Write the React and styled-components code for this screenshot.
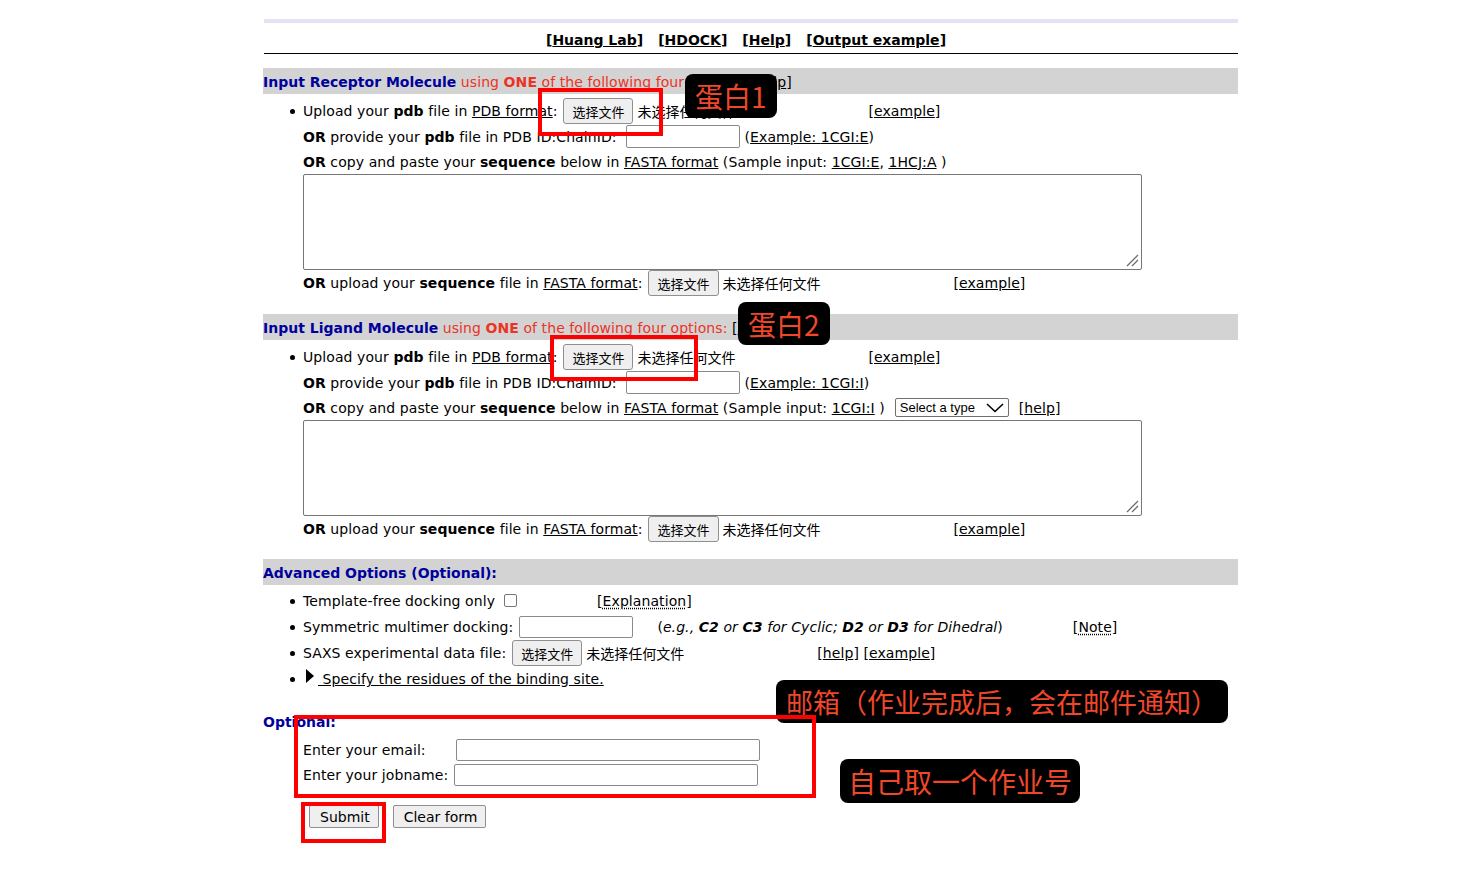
import React from "react";
import styled, { createGlobalStyle, css } from "styled-components";

const GlobalStyle = createGlobalStyle`
  html, body { margin: 0; padding: 0; background: #fff; }
  body {
    font-family: "DejaVu Sans", Verdana, "Noto Sans CJK SC", sans-serif;
    font-size: 14px;
    letter-spacing: 0.08px;
    color: #000;
  }
`;

const Page = styled.div`
  position: relative;
  width: 974px;
  margin-left: 264px;
  padding-top: 19px;
  padding-bottom: 40px;
`;

const TopBar = styled.div`
  height: 4px;
  background: #e7e1f5;
`;

const Nav = styled.div`
  display: flex;
  justify-content: center;
  gap: 15px;
  padding: 8px 10px 3px 0;
  border-bottom: 1px solid #000;
  font-weight: bold;
  line-height: 19px;
  letter-spacing: 0;
`;

const A = styled.span`
  color: #000;
  text-decoration: underline;
  ${p => p.$dotted && css`
    text-decoration: underline dotted;
    text-underline-offset: 2px;
  `}
`;

const SectionHead = styled.div`
  height: 26px;
  display: flex;
  align-items: center;
  padding-top: 1px;
  box-sizing: border-box;
  background: ${p => (p.$plain ? "transparent" : "#d3d3d3")};
  margin-top: ${p => p.$top}px;
  white-space: pre;
  margin-left: -1px;
`;

const Navy = styled.b`
  color: #00009c;
  letter-spacing: 0;
`;

const Red = styled.span`
  color: #ec3326;
`;

const List = styled.div`
  margin-top: ${p => p.$top || 4}px;
  padding-left: 39px;
`;

const Row = styled.div`
  position: relative;
  height: ${p => p.$h || 25}px;
  display: flex;
  align-items: center;
  white-space: pre;
  ${p => p.$bullet && css`
    &::before {
      content: "";
      position: absolute;
      left: -13px;
      top: 50%;
      width: 5px;
      height: 5px;
      margin-top: -2px;
      border-radius: 50%;
      background: #000;
    }
  `}
`;

const FileBox = styled.span`
  display: inline-flex;
  align-items: center;
  width: ${p => p.$w || 305}px;
  margin-left: ${p => p.$ml || 5}px;
  flex-shrink: 0;
  letter-spacing: 0;
`;

const FileButton = styled.span`
  display: inline-flex;
  align-items: center;
  justify-content: center;
  height: 24px;
  padding: 0 8px;
  border: 1px solid #8f8f8f;
  border-radius: 3px;
  background: #efefef;
  font-family: "Noto Sans CJK SC", sans-serif;
  font-size: 13px;
  color: #000;
`;

const NoFile = styled.span`
  margin-left: 4px;
  font-family: "Noto Sans CJK SC", sans-serif;
  font-size: 14px;
`;

const TextInput = styled.span`
  display: inline-block;
  width: ${p => p.$w}px;
  height: ${p => p.$h || 21}px;
  border: 1px solid #8a8a8a;
  border-radius: 2px;
  margin-left: ${p => p.$ml || 6}px;
  margin-right: ${p => p.$mr || 5}px;
  background: #fff;
  flex-shrink: 0;
`;

const TextArea = styled.div`
  position: relative;
  width: 837px;
  height: 94px;
  border: 1px solid #767676;
  border-radius: 2px;
`;

const Grip = styled.svg`
  position: absolute;
  right: 2px;
  bottom: 2px;
`;

const Select = styled.span`
  display: inline-flex;
  align-items: center;
  justify-content: space-between;
  width: 104px;
  height: 17px;
  padding: 0 4px 0 4px;
  margin-left: 10px;
  border: 1px solid #6f6f6f;
  border-radius: 2px;
  font-family: "Liberation Sans", Arial, sans-serif;
  font-size: 13px;
  letter-spacing: 0;
`;

const Gap = styled.span`
  display: inline-block;
  width: ${p => p.$w}px;
  flex-shrink: 0;
`;

const Checkbox = styled.span`
  display: inline-block;
  width: 11px;
  height: 11px;
  border: 1px solid #767676;
  border-radius: 2px;
  margin-left: 9px;
  margin-bottom: 2px;
`;

const Triangle = styled.span`
  display: inline-block;
  width: 0;
  height: 0;
  border-top: 7px solid transparent;
  border-bottom: 7px solid transparent;
  border-left: 8px solid #000;
  margin: 0 4px 6px 3px;
`;

const FormGrid = styled.div`
  display: grid;
  grid-template-columns: auto auto;
  justify-content: start;
  align-items: center;
  row-gap: 3px;
  column-gap: 6px;
  padding-left: 39px;
  margin-top: 5px;
`;

const FormInput = styled.span`
  display: inline-block;
  width: 302px;
  height: 20px;
  border: 1px solid #8a8a8a;
  border-radius: 2px;
  margin-left: ${p => p.$ml || 0}px;
`;

const Buttons = styled.div`
  display: flex;
  gap: 14px;
  padding-left: 45px;
  margin-top: 19px;
`;

const Button = styled.span`
  display: inline-flex;
  align-items: center;
  height: 21px;
  padding: 0 8px 0 10px;
  border: 1px solid #8f8f8f;
  border-radius: 2px;
  background: #efefef;
  font-size: 14px;
  letter-spacing: 0;
`;

/* annotation overlays drawn on top of the screenshot */
const Mark = styled.div`
  position: absolute;
  left: ${p => p.$x}px;
  top: ${p => p.$y}px;
  width: ${p => p.$w}px;
  height: ${p => p.$h}px;
  border: 4px solid #ff0000;
  box-sizing: border-box;
  pointer-events: none;
`;

const Label = styled.div`
  position: absolute;
  left: ${p => p.$x}px;
  top: ${p => p.$y}px;
  height: ${p => p.$h || 43}px;
  padding: 0 ${p => p.$px || 10}px;
  display: flex;
  align-items: center;
  background: #000;
  border-radius: 8px;
  color: #f0472b;
  font-family: "Noto Sans CJK SC", sans-serif;
  font-size: ${p => p.$fs || 28}px;
  letter-spacing: 0;
  white-space: nowrap;
`;

const ResizeGrip = () => (
  <Grip width="14" height="14" viewBox="0 0 14 14">
    <path d="M2 13 L13 2 M7 13 L13 7" stroke="#6b6b6b" strokeWidth="1.3" />
  </Grip>
);

const Chevron = () => (
  <svg width="18" height="10" viewBox="0 0 18 10">
    <path d="M1 1 L9 8.5 L17 1" fill="none" stroke="#000" strokeWidth="1.6" />
  </svg>
);

const FileInput = ({ w, ml }) => (
  <FileBox $w={w} $ml={ml}>
    <FileButton>选择文件</FileButton>
    <NoFile>未选择任何文件</NoFile>
  </FileBox>
);

const MoleculeSection = ({ title, top, listTop, sample, extra }) => (
  <>
    <SectionHead $top={top}>
      <Navy>{title}</Navy>
      <Red> using <b>ONE</b> of the following four options: </Red>[<A>help</A>]
    </SectionHead>
    <List $top={listTop}>
      <Row $bullet $h={26}>
        Upload your <b>pdb</b> file in <A>PDB format</A>:
        <FileInput ml={6} />
        [<A>example</A>]
      </Row>
      <Row>
        <b>OR</b> provide your <b>pdb</b> file in PDB ID:ChainID:
        <TextInput $w={112} $ml={9} />
        (<A>Example: {sample[0]}</A>)
      </Row>
      <Row>
        <b>OR</b> copy and paste your <b>sequence</b> below in <A>FASTA format</A> (Sample input: {sample.map((s, i) => (
          <React.Fragment key={s}>{i > 0 && ", "}<A>{s}</A></React.Fragment>
        ))} )
        {extra}
      </Row>
      <TextArea>
        <ResizeGrip />
      </TextArea>
      <Row $h={26}>
        <b>OR</b> upload your <b>sequence</b> file in <A>FASTA format</A>:
        <FileInput ml={6} />
        [<A>example</A>]
      </Row>
    </List>
  </>
);

export default function App() {
  return (
    <>
      <GlobalStyle />
      <Page>
        <TopBar />
        <Nav>
          <span>[<A>Huang Lab</A>]</span>
          <span>[<A>HDOCK</A>]</span>
          <span>[<A>Help</A>]</span>
          <span>[<A>Output example</A>]</span>
        </Nav>

        <MoleculeSection title="Input Receptor Molecule" top={14} listTop={4} sample={["1CGI:E", "1HCJ:A"]} />

        <MoleculeSection
          title="Input Ligand Molecule"
          top={18}
          listTop={4}
          sample={["1CGI:I"]}
          extra={
            <>
              <Select>Select a type<Chevron /></Select>
              <Gap $w={10} />[<A>help</A>]
            </>
          }
        />

        <SectionHead $top={17}>
          <Navy>Advanced Options (Optional):</Navy>
        </SectionHead>
        <List $top={3}>
          <Row $bullet $h={26}>
            Template-free docking only<Checkbox />
            <Gap $w={80} />[<A $dotted>Explanation</A>]
          </Row>
          <Row $bullet $h={26}>
            Symmetric multimer docking:
            <TextInput $w={112} $h={20} $ml={6} $mr={24} />
            (<i>e.g., <b>C2</b> or <b>C3</b> for Cyclic; <b>D2</b> or <b>D3</b> for Dihedral</i>)
            <Gap $w={70} />[<A $dotted>Note</A>]
          </Row>
          <Row $bullet $h={26}>
            SAXS experimental data file:
            <FileInput ml={6} />
            [<A>help</A>] [<A>example</A>]
          </Row>
          <Row $bullet $h={26}>
            <Triangle />
            <A> Specify the residues of the binding site.</A>
          </Row>
        </List>

        <SectionHead $plain $top={16}>
          <Navy>Optional:</Navy>
        </SectionHead>
        <FormGrid>
          <span>Enter your email:</span>
          <FormInput $ml={2} />
          <span>Enter your jobname:</span>
          <FormInput />
        </FormGrid>
        <Buttons>
          <Button>Submit</Button>
          <Button>Clear form</Button>
        </Buttons>

        <Label $x={421} $y={74} $h={44}>蛋白1</Label>
        <Mark $x={274} $y={88} $w={125} $h={48} />
        <Label $x={474} $y={302} $h={43}>蛋白2</Label>
        <Mark $x={286} $y={335} $w={148} $h={46} />
        <Label $x={512} $y={680} $h={43} $fs={27}>邮箱（作业完成后，会在邮件通知）</Label>
        <Mark $x={30} $y={715} $w={522} $h={83} />
        <Label $x={576} $y={759} $h={44} $px={8}>自己取一个作业号</Label>
        <Mark $x={37} $y={802} $w={85} $h={41} />
      </Page>
    </>
  );
}
